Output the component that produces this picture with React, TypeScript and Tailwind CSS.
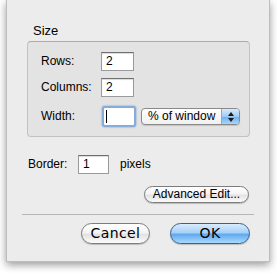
const label = "font-['Liberation_Sans',Arial,sans-serif] text-[12px] leading-[15px] text-black";

const Field = ({ value, className = "" }: { value: string; className?: string }) => (
  <div
    className={`h-[19px] bg-white border border-[#9a9a9a] border-t-[#6f6f6f] shadow-[inset_0_1px_1px_rgba(0,0,0,0.15)] flex items-center pl-[4px] ${label} ${className}`}
  >
    {value}
  </div>
);

const PillButton = ({ text, primary = false, className = "" }: { text: string; primary?: boolean; className?: string }) => (
  <div
    className={`h-[21px] rounded-full flex items-center justify-center font-['DejaVu_Sans',sans-serif] text-[14px] tracking-[0.4px] text-black ${
      primary
        ? "border border-[#3d5e92] bg-[linear-gradient(#d9ecfd_0%,#a6d1f8_45%,#62a9ee_55%,#a9dafd_100%)]"
        : "border border-[#7c7c7c] bg-[linear-gradient(#ffffff_0%,#f4f4f4_45%,#e2e2e2_55%,#fbfbfb_100%)]"
    } shadow-[0_1px_1px_rgba(0,0,0,0.2)] ${className}`}
  >
    {text}
  </div>
);

export default function App() {
  return (
    <div className="w-[277px] h-[274px] bg-white">
      <div className="ml-[6px] w-[264px] h-[262px] bg-[#ececec] border-x border-b border-[#bdbdbd] shadow-[0_3px_8px_rgba(0,0,0,0.4)] flex flex-col">
        <div className="pl-[26px] pt-[23px] h-[38px] font-['Liberation_Sans',Arial,sans-serif] text-[13px] leading-[15px]">
          Size
        </div>
        <div className="mt-[3px] ml-[20px] w-[223px] h-[96px] rounded-[4px] border border-[#c2c2c2] border-t-[#ababab] bg-[#e3e3e3] pl-[13px] pt-[10px] flex flex-col">
          <div className="flex items-center h-[19px]">
            <span className={`${label} w-[60px]`}>Rows:</span>
            <Field value="2" className="w-[33px]" />
          </div>
          <div className="flex items-center h-[19px] mt-[7px]">
            <span className={`${label} w-[60px]`}>Columns:</span>
            <Field value="2" className="w-[33px]" />
          </div>
          <div className="flex items-center h-[21px] mt-[9px]">
            <span className={`${label} w-[61px]`}>Width:</span>
            <div className="w-[34px] h-[21px] rounded-[3px] border-[2px] border-[#86acdb] shadow-[0_0_2px_#5f92d4] bg-white flex items-center pl-[2px]">
              <div className="w-[1px] h-[13px] bg-black" />
            </div>
            <div className="ml-[5px] w-[99px] h-[17px] rounded-[4px] border border-[#8a8a8a] bg-[linear-gradient(#ffffff,#f0f0f0)] shadow-[0_1px_1px_rgba(0,0,0,0.15)] flex overflow-hidden">
              <span className={`${label} flex-1 pl-[6px] leading-[15px]`}>% of window</span>
              <div className="w-[18px] h-full border-l border-[#8fa6c4] bg-[linear-gradient(#d6eafc_0%,#9ecbf5_50%,#6aaeee_51%,#a8d6fb_100%)] flex flex-col items-center justify-center gap-[2px]">
                <svg width="6" height="4" viewBox="0 0 6 4"><path d="M3 0L6 4H0Z" fill="#1a1a1a" /></svg>
                <svg width="6" height="4" viewBox="0 0 6 4"><path d="M0 0H6L3 4Z" fill="#1a1a1a" /></svg>
              </div>
            </div>
          </div>
        </div>
        <div className="mt-[18px] ml-[21px] flex items-center h-[19px]">
          <span className={`${label} w-[50px]`}>Border:</span>
          <Field value="1" className="w-[31px]" />
          <span className={`${label} ml-[11px]`}>pixels</span>
        </div>
        <div className="mt-[12px] flex justify-end pr-[20px]">
          <div className="w-[105px] h-[17px] rounded-full border border-[#7c7c7c] bg-[linear-gradient(#ffffff_0%,#f4f4f4_45%,#e3e3e3_55%,#fbfbfb_100%)] shadow-[0_1px_1px_rgba(0,0,0,0.2)] flex items-center justify-center font-['Liberation_Sans',Arial,sans-serif] text-[12px] leading-[15px]">
            Advanced Edit...
          </div>
        </div>
        <div className="mt-[11px] mx-[15px] h-[1px] bg-[#b5b5b5]" />
        <div className="mt-[8px] flex justify-end pr-[19px] gap-[20px]">
          <PillButton text="Cancel" className="w-[69px]" />
          <PillButton text="OK" primary className="w-[80px]" />
        </div>
      </div>
    </div>
  );
}
